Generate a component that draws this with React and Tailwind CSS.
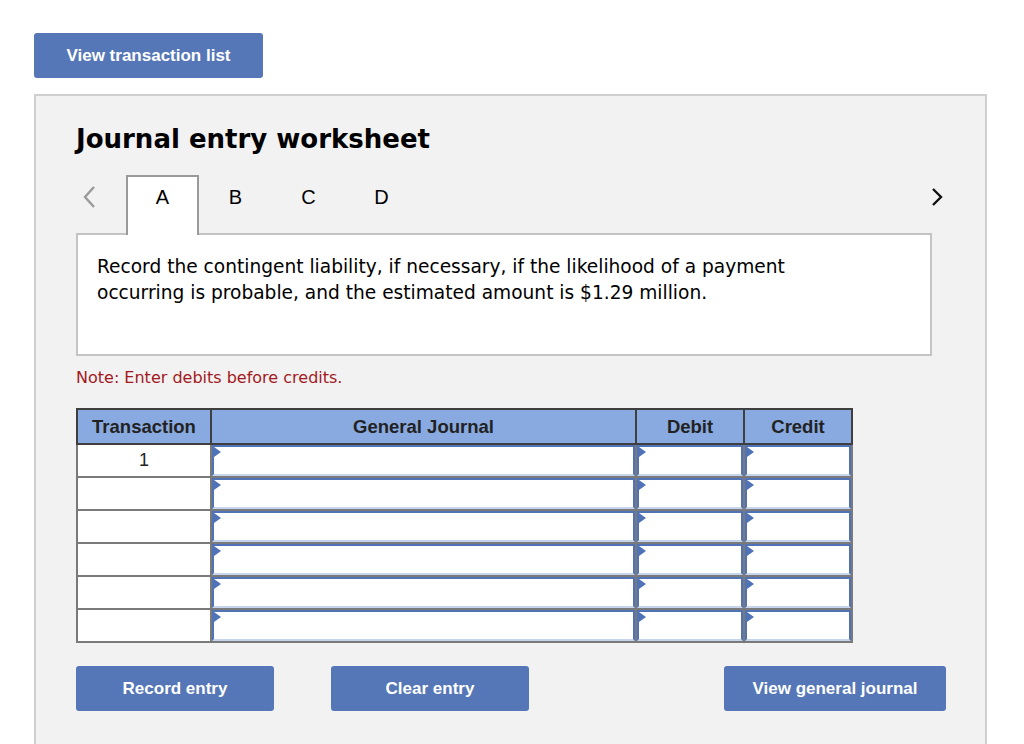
import React from "react";

const verdana = { fontFamily: '"DejaVu Sans", Verdana, sans-serif' };
const arial = { fontFamily: '"Liberation Sans", Arial, sans-serif' };

function BlueButton({ children, className = "" }) {
  return (
    <button
      className={`h-[45px] rounded-[3px] bg-[#5577b8] text-[17px] font-bold text-white ${className}`}
      style={arial}
    >
      {children}
    </button>
  );
}

function InputCell() {
  return (
    <td className="relative h-[33px] border-2 border-[#7a7a7a] p-0">
      <div className="h-full w-full border-2 border-[#4f73b6] border-b-[#c6d4ec] bg-white" />
      <span className="absolute left-[2px] top-[2px] h-0 w-0 border-y-[5px] border-l-[7px] border-y-transparent border-l-[#4f73b6]" />
    </td>
  );
}

export default function App() {
  const rows = [1, 2, 3, 4, 5, 6];

  return (
    <div className="min-h-[744px] bg-white pl-[34px] pt-[33px]">
      <BlueButton className="w-[229px]">View transaction list</BlueButton>

      <section className="mt-[16px] w-[953px] border-2 border-[#cfcfcf] bg-[#f2f2f2] pb-[60px] pl-[40px]">
        <h1 className="mt-[25px] text-[26px] font-bold leading-[36px] text-black" style={verdana}>
          Journal entry worksheet
        </h1>

        <div className="mt-[18px] flex h-[59px] items-start">
          <div className="flex h-[44px] w-[50px] items-center pl-[4px]">
            <svg width="18" height="26" viewBox="0 0 18 26" fill="none">
              <path d="M14 3 L5 13 L14 23" stroke="#9a9a9a" strokeWidth="2.4" />
            </svg>
          </div>
          <div
            className="relative z-10 flex h-[60px] w-[73px] justify-center border-2 border-b-0 border-[#9a9a9a] bg-white pt-[8px] text-[20px] leading-[24px] text-black"
            style={arial}
          >
            A
          </div>
          {["B", "C", "D"].map((t) => (
            <div
              key={t}
              className="flex w-[73px] justify-center pt-[10px] text-[20px] leading-[24px] text-black"
              style={arial}
            >
              {t}
            </div>
          ))}
          <div className="ml-auto mr-[40px] flex h-[44px] items-center">
            <svg width="16" height="26" viewBox="0 0 16 26" fill="none">
              <path d="M4 5 L12 13 L4 21" stroke="#111" strokeWidth="2.4" />
            </svg>
          </div>
        </div>

        <div
          className="-mt-[1px] h-[123px] w-[856px] border-2 border-[#c4c4c4] bg-white px-[19px] pt-[19px] text-[18.6px] leading-[26px] text-black"
          style={verdana}
        >
          Record the contingent liability, if necessary, if the likelihood of a payment
          <br />
          occurring is probable, and the estimated amount is $1.29 million.
        </div>

        <p className="mt-[10px] text-[16px] leading-[24px] text-[#a3191d]" style={verdana}>
          Note: Enter debits before credits.
        </p>

        <table
          className="mt-[18px] w-[777px] border-collapse border-2 border-[#8a8a8a] bg-white"
          style={arial}
        >
          <thead>
            <tr className="h-[35px] bg-[#88aae0] text-[18.5px] font-bold text-[#222]">
              <th className="w-[134px] border-2 border-[#3f3f3f] font-bold">Transaction</th>
              <th className="border-2 border-[#3f3f3f] font-bold">General Journal</th>
              <th className="w-[108px] border-2 border-[#3f3f3f] font-bold">Debit</th>
              <th className="w-[108px] border-2 border-[#3f3f3f] font-bold">Credit</th>
            </tr>
          </thead>
          <tbody>
            {rows.map((r) => (
              <tr key={r}>
                <td className="h-[33px] border-2 border-[#7a7a7a] text-center align-middle text-[18px] text-[#222]">
                  {r === 1 ? "1" : ""}
                </td>
                <InputCell />
                <InputCell />
                <InputCell />
              </tr>
            ))}
          </tbody>
        </table>

        <div className="mt-[23px] flex w-[870px] items-center">
          <BlueButton className="w-[198px]">Record entry</BlueButton>
          <BlueButton className="ml-[57px] w-[198px]">Clear entry</BlueButton>
          <BlueButton className="ml-auto w-[222px]">View general journal</BlueButton>
        </div>
      </section>
    </div>
  );
}
